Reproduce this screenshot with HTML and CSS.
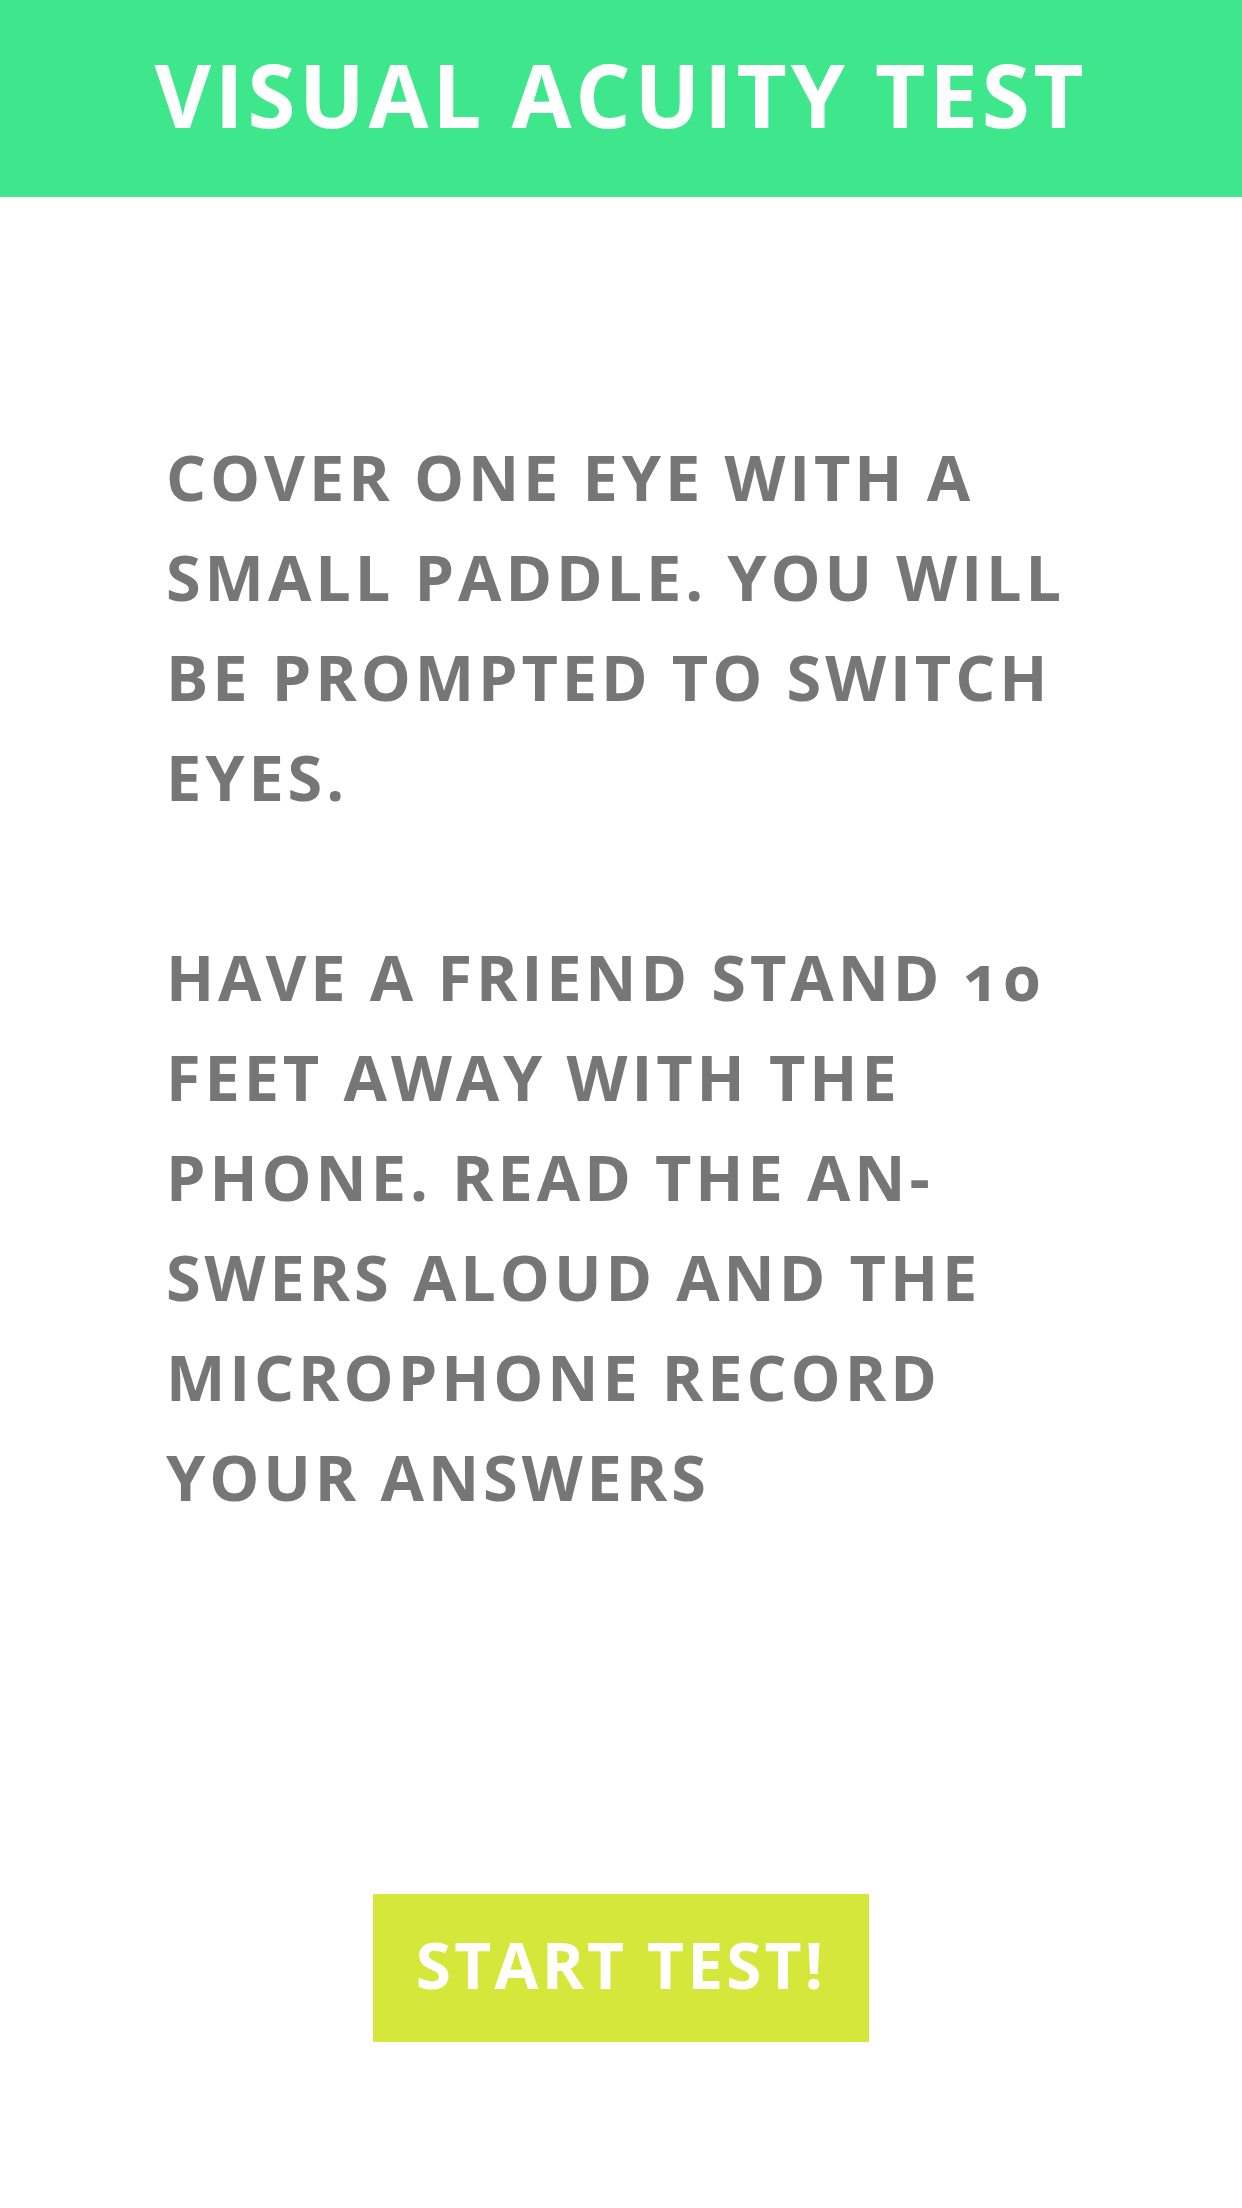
FILE: index.html
```html
<!DOCTYPE html>
<html lang="en">
<head>
<meta charset="utf-8">
<title>Visual Acuity Test</title>
<link rel="stylesheet" href="styles.css">
</head>
<body>
<header class="topbar">
  <h1 class="title">VISUAL ACUITY TEST</h1>
</header>
<main class="content">
  <p class="instr">COVER ONE EYE WITH A<br>SMALL PADDLE. YOU WILL<br>BE PROMPTED TO SWITCH<br>EYES.</p>
  <p class="instr">HAVE A FRIEND STAND 10<br>FEET AWAY WITH THE<br>PHONE. READ THE AN-<br>SWERS ALOUD AND THE<br>MICROPHONE RECORD<br>YOUR ANSWERS</p>
  <div class="actions">
    <button class="start" type="button">START TEST!</button>
  </div>
</main>
</body>
</html>
```
FILE: styles.css
```css
html, body {
  margin: 0;
  padding: 0;
  background: #ffffff;
}
body {
  width: 1242px;
  height: 2208px;
  font-family: "Open Sans", "Liberation Sans", sans-serif;
  overflow: hidden;
}
.topbar {
  height: 197px;
  background: #3ee68c;
  display: flex;
  align-items: center;
  justify-content: center;
}
.title {
  margin: 0;
  color: #ffffff;
  font-size: 87px;
  font-weight: 700;
  letter-spacing: 0.043em;
  line-height: 1;
  padding-bottom: 8px;
}
.content {
  padding: 230px 0 0 166px;
  display: flex;
  flex-direction: column;
}
.instr {
  margin: 0 0 100px 0;
  color: #767676;
  font-size: 63px;
  font-weight: 700;
  line-height: 100px;
  letter-spacing: 0.062em;
  font-variant-numeric: oldstyle-nums;
  font-feature-settings: "onum" 1;
}
.instr:last-of-type {
  margin-bottom: 0;
}
.actions {
  display: flex;
  justify-content: center;
  margin-left: -166px;
  margin-top: 367px;
}
.start {
  width: 496px;
  height: 148px;
  border: none;
  background: #d5e73b;
  color: #ffffff;
  font-family: "Open Sans", "Liberation Sans", sans-serif;
  font-size: 64px;
  font-weight: 700;
  letter-spacing: 0.049em;
  padding: 0 0 8px 0;
}
```
